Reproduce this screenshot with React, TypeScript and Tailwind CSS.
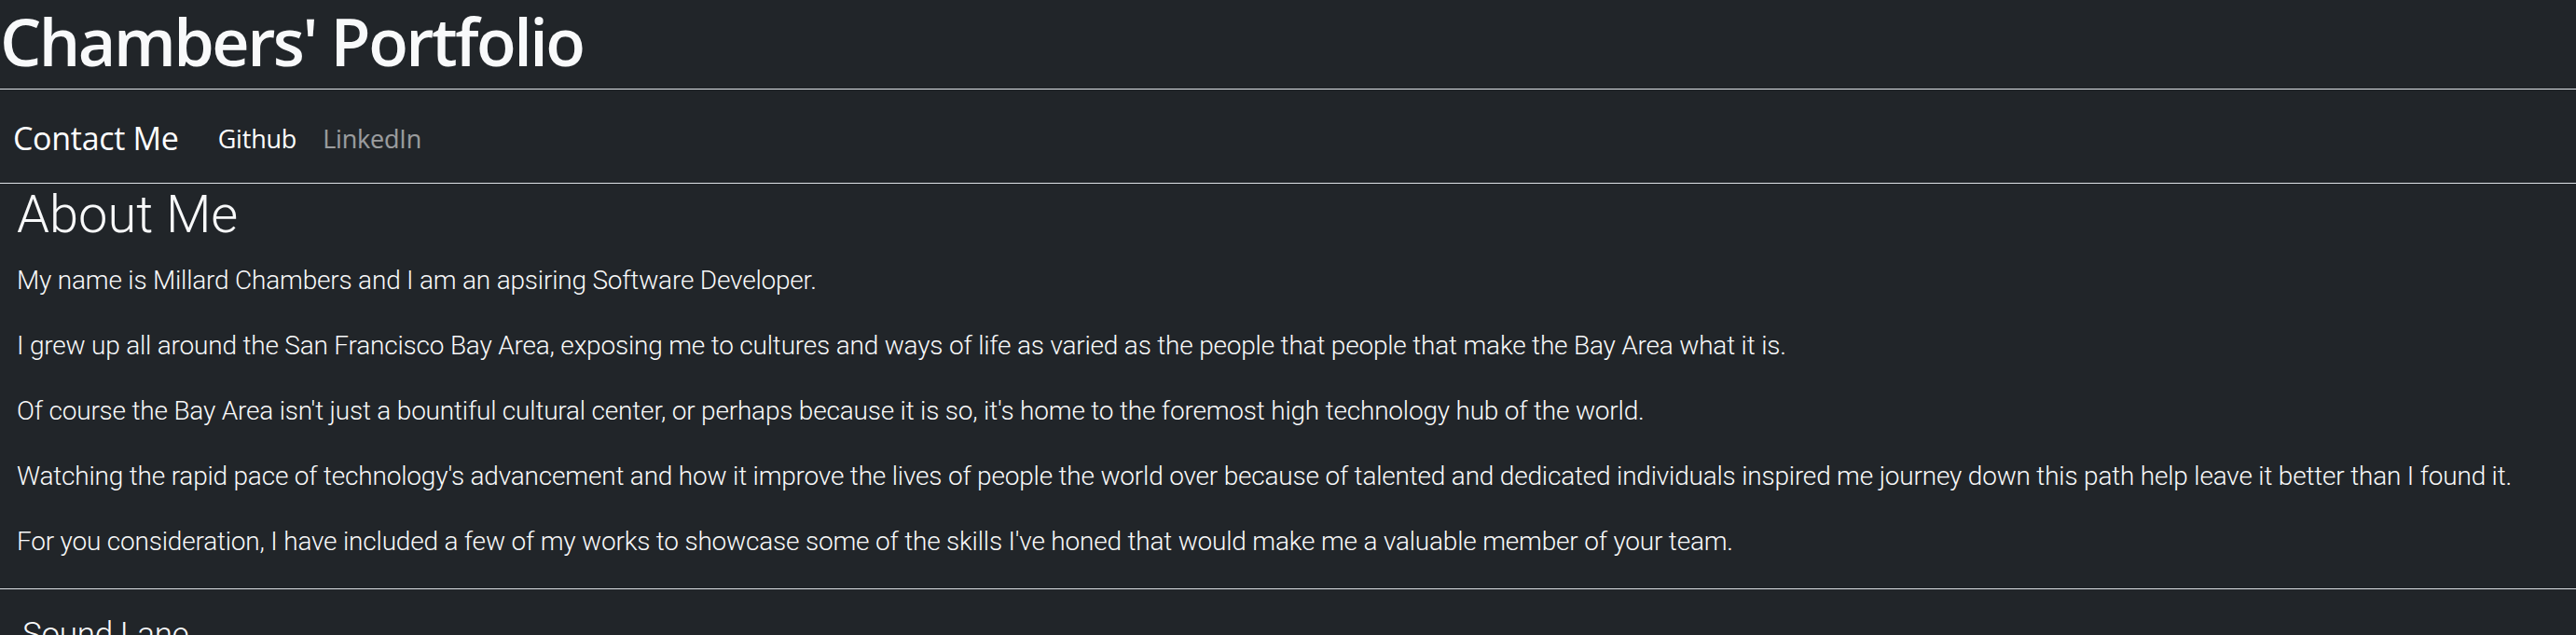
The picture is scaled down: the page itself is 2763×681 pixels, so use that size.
const paragraphs = [
  "My name is Millard Chambers and I am an apsiring Software Developer.",
  "I grew up all around the San Francisco Bay Area, exposing me to cultures and ways of life as varied as the people that people that make the Bay Area what it is.",
  "Of course the Bay Area isn't just a bountiful cultural center, or perhaps because it is so, it's home to the foremost high technology hub of the world.",
  "Watching the rapid pace of technology's advancement and how it improve the lives of people the world over because of talented and dedicated individuals inspired me journey down this path help leave it better than I found it.",
  "For you consideration, I have included a few of my works to showcase some of the skills I've honed that would make me a valuable member of your team.",
];

export default function App() {
  return (
    <div className="min-h-screen overflow-hidden bg-[#212529] text-[#f8f9fa]">
      {/* header */}
      <header className="h-[96px] border-b border-[#dee2e6] font-['Open_Sans',sans-serif]">
        <h1 className="whitespace-nowrap pt-[2px] text-[70px] font-semibold leading-[84px] tracking-[-2.5px] text-[#f8f9fa]">
          Chambers' Portfolio
        </h1>
      </header>

      {/* nav */}
      <nav className="flex h-[101px] items-center gap-[42px] border-b border-[#dee2e6] pl-[14px] pt-[5px] font-['Open_Sans',sans-serif]">
        <a className="pb-[2px] text-[34px] leading-none tracking-[-0.3px] text-white">Contact Me</a>
        <div className="flex items-center gap-[28px] text-[27px] leading-none tracking-[-0.2px]">
          <a className="text-white">Github</a>
          <a className="text-white/55">LinkedIn</a>
        </div>
      </nav>

      {/* about */}
      <section className="h-[435px] border-b border-[#dee2e6] px-[18px] font-['Roboto',sans-serif] font-light">
        <h2 className="mb-[16px] text-[56px] leading-[67px]">About Me</h2>
        {paragraphs.map((p) => (
          <p key={p} className="mb-[28px] text-[28px] leading-[42px] tracking-[-0.2px]">
            {p}
          </p>
        ))}
      </section>

      {/* projects */}
      <section className="px-[24px] pt-[28px] font-['Roboto',sans-serif] font-light">
        <h3 className="text-[35px] leading-[42px] tracking-[-0.3px]">Sound Lane</h3>
      </section>
    </div>
  );
}
